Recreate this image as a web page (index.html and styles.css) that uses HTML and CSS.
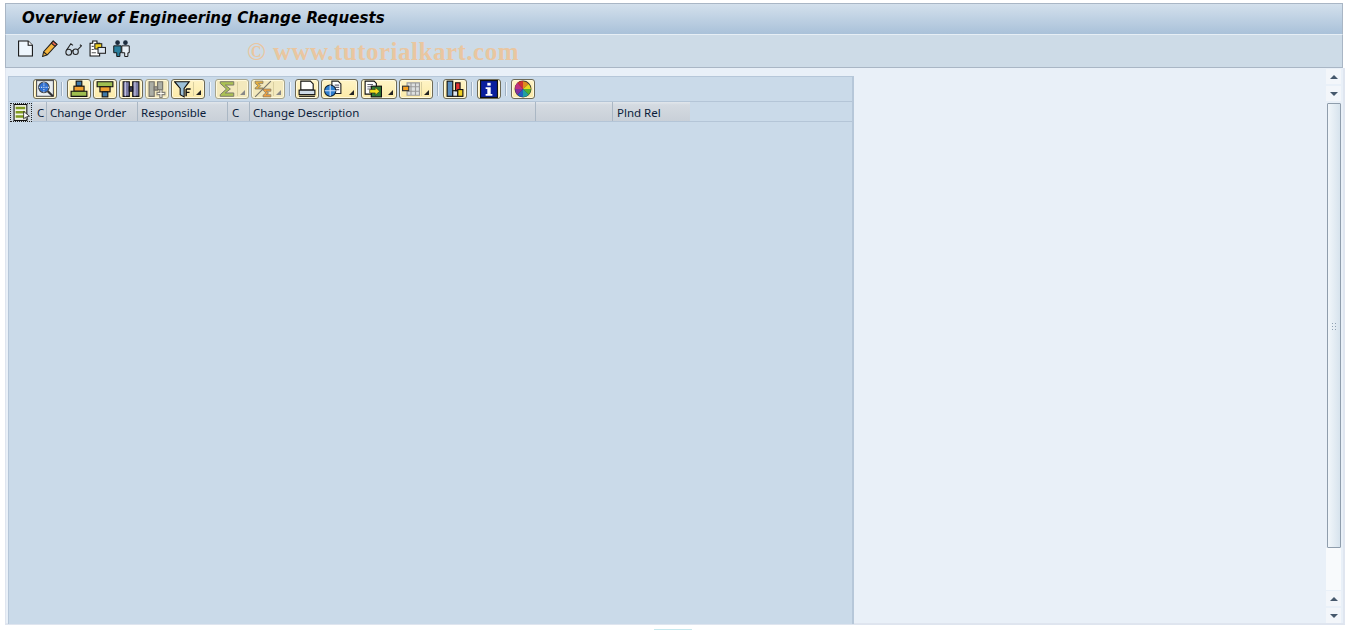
FILE: index.html
```html
<!DOCTYPE html>
<html lang="en">
<head>
<meta charset="utf-8">
<title>Overview of Engineering Change Requests</title>
<link rel="stylesheet" href="styles.css">
</head>
<body>
<div class="app">
  <header class="titlebar"><h1>Overview of Engineering Change Requests</h1></header>
  <nav class="apptools">
    <svg class="ti" viewBox="0 0 16 16"><path d="M1.500 1h9l4 4v10h-13z" fill="#eef6fd" stroke="#111"/><path d="M10.500 1v4h4" fill="#fff" stroke="#111"/></svg>
    <svg class="ti" viewBox="0 0 16 16"><path d="M11.500 1l3.500 3-9 10-4.500 1.500 1-4.500z" fill="#f5b53c" stroke="#222"/><path d="M11.500 1l3.500 3-1.800 2-3.500-3z" fill="#e7664d" stroke="#222"/><path d="M2.800 11.500l3 2.500" stroke="#222" fill="none"/></svg>
    <svg class="ti" viewBox="0 0 16 16"><g fill="none" stroke="#222"><ellipse cx="3.500" cy="11.500" rx="2.700" ry="2.800"/><ellipse cx="10" cy="11" rx="2.500" ry="2.600"/><path d="M6 10.500l1.700-.5M1.500 9.500l4-6 2 1.500M12 9l3.500-3.500-1.500-1"/></g></svg>
    <svg class="ti" viewBox="0 0 16 16"><path d="M1 3h2.500V1h4v2H10v12H1z" fill="#fff" stroke="#111"/><path d="M2.500 6h2M2.500 9h2M2.500 12h4" stroke="#555"/><rect x="5.500" y="3.500" width="6.500" height="5" fill="#f0d020" stroke="#222"/><rect x="8.500" y="7" width="7" height="5.500" fill="#dfe8f2" stroke="#222"/></svg>
    <svg class="ti" viewBox="0 0 16 16"><circle cx="4.300" cy="2.500" r="2.200" fill="#1c2b3c"/><circle cx="11.700" cy="2.500" r="2.200" fill="#1c2b3c"/><path d="M.7 5.500h7v6.500H6.500v3.500h-3V12H.7z" fill="#2a7f9e" stroke="#111" stroke-width=".9"/><path d="M8.300 5.500h7V12H14v3.500h-3V12H8.300z" fill="#e9f0f6" stroke="#111" stroke-width=".9"/></svg>
  </nav>
  <div class="watermark">© www.tutorialkart.com</div>
  <main class="workspace">
    <section class="grid-panel">
      <div class="grid-tools">
        <button class="btn"><svg viewBox="0 0 16 16"><rect x=".5" y=".5" width="15" height="14" fill="#e8eef2" stroke="#555"/><circle cx="7" cy="6.500" r="4.700" fill="#2f6fd0" stroke="#444"/><path d="M2.500 6.500h9M7 2v9" stroke="#d0e0f5" stroke-dasharray="1 1"/><path d="M10.500 10l4.500 4.500" stroke="#333" stroke-width="2"/></svg></button>
        <span class="sep"></span>
        <button class="btn"><svg viewBox="0 0 16 16"><rect x="5.500" y="1" width="5" height="4.500" fill="#3d78a8" stroke="#111"/><rect x="3.500" y="5.500" width="9" height="4.500" fill="#f0a030" stroke="#111"/><path d="M1 10h14v4.500H1z" fill="#9fbf50" stroke="#111"/></svg></button>
        <button class="btn"><svg viewBox="0 0 16 16"><path d="M1 1.500h14V6H1z" fill="#9fbf50" stroke="#111"/><rect x="3.500" y="6" width="9" height="4.500" fill="#f0a030" stroke="#111"/><rect x="5.500" y="10.500" width="5" height="4.500" fill="#3d78a8" stroke="#111"/></svg></button>
        <button class="btn"><svg viewBox="0 0 16 16"><path d="M1 1.500h5.500v13H1zM9.500 1.500H15v13H9.500z" fill="#7d7da8" stroke="#111"/><path d="M3 1.500v13M11.500 1.500v13" stroke="#c4c4dc"/><path d="M6.500 6h3v4h-3z" fill="#3a3a55" stroke="#111"/></svg></button>
        <button class="btn dim"><svg viewBox="0 0 16 16"><path d="M1 1.500h4.500v13H1zM8.500 1.500H13v7H8.500z" fill="#9aa0a0" stroke="#555"/><path d="M5.500 6h3v3h-3z" fill="#888" stroke="#555"/><path d="M10.500 8.500h2v2.500H15v2h-2.500v2.500h-2V13H8v-2h2.500z" fill="#fff" stroke="#666"/></svg></button>
        <button class="btn split"><svg viewBox="0 0 16 16"><path d="M.5 1.500h13L9 7.500V15l-3.500-2V7.500z" fill="#9cc0d8" stroke="#111"/><path d="M10.800 8h4M10.800 8v6.500M10.800 11h3" stroke="#111" stroke-width="1.300" fill="none"/></svg><i class="caret"></i></button>
        <span class="sep"></span>
        <button class="btn split dim"><svg viewBox="0 0 16 16"><path d="M14 4.500V1.500H2v1.500L7.500 8 2 13v1.500h12v-3H6.500L11 8 6.500 4.500z" fill="#9ab83a" stroke="#555" stroke-width=".8"/></svg><i class="caret"></i></button>
        <button class="btn split dim"><svg viewBox="0 0 16 16"><path d="M1 1h7v2H4l2 2-2 2h4v1H1V7l2.500-2L1 3z" fill="#e0a020" stroke="#555" stroke-width=".6"/><path d="M8 8h7v2h-4l2 1.500L11 13h4v2H8v-1.500l2.500-2L8 9z" fill="#f09020" stroke="#555" stroke-width=".6"/><path d="M1 15L15 1" stroke="#555"/></svg><i class="caret"></i></button>
        <span class="sep"></span>
        <button class="btn"><svg viewBox="0 0 16 16"><path d="M2.500 1H11l2.500 2.500V9h-11z" fill="#fff" stroke="#111"/><rect x="1" y="9" width="14" height="4" fill="#cfdbe6" stroke="#111"/><path d="M1 14.500h14" stroke="#111"/></svg></button>
        <button class="btn split wide"><svg viewBox="0 0 16 16"><path d="M7 1h5.500L15 3.500V12H7z" fill="#fff" stroke="#222"/><path d="M9.500 4.500h4M9.500 6.500h4M9.500 8.500h4" stroke="#667"/><circle cx="5.500" cy="9.500" r="5" fill="#2f7fd0" stroke="#123"/><path d="M5.500 4.500v10M.5 9.500h10" stroke="#cfe4fa"/></svg><i class="caret"></i></button>
        <button class="btn split wide2"><svg viewBox="0 0 16 16"><path d="M1 1h8l2 2v9.500H1z" fill="#fff" stroke="#111"/><path d="M3 4h5M3 6h5M3 8h3" stroke="#667"/><rect x="6.500" y="5.500" width="9" height="9.500" fill="#2e7d32" stroke="#111"/><path d="M5 8.500h5v-2l4 3.500-4 3.500v-2H5z" fill="#f5e020" stroke="#222" stroke-width=".5"/></svg><i class="caret"></i></button>
        <button class="btn split wide3"><svg viewBox="0 0 16 16"><path d="M4.500 2.500h11v11h-11zM4.500 6h11M4.500 10h11M8 2.500v11M12 2.500v11" fill="#dde0e0" stroke="#9a9a9a"/><rect x=".5" y="5.500" width="5.500" height="4" fill="#f5a020" stroke="#333"/></svg><i class="caret"></i></button>
        <span class="sep"></span>
        <button class="btn"><svg viewBox="0 0 16 16"><rect x="1" y="1" width="5" height="13.500" fill="#5b8fc0" stroke="#111"/><rect x="6" y="9.500" width="4.500" height="5" fill="#dfe6ee" stroke="#111"/><rect x="8.500" y="2.500" width="4" height="7" fill="#e03030" stroke="#111"/><rect x="10.500" y="8.500" width="4.500" height="6" fill="#f0d020" stroke="#111"/></svg></button>
        <span class="sep"></span>
        <button class="btn"><svg viewBox="0 0 16 16"><rect x=".5" y=".5" width="15" height="15" fill="#0a1f9e" stroke="#111"/><rect x="6.500" y="2.500" width="3" height="2.500" fill="#fff"/><path d="M5 6.500h4.500v6H11V14H5v-1.500h1.500v-4.500H5z" fill="#fff"/></svg></button>
        <span class="sep"></span>
        <button class="btn"><svg viewBox="0 0 16 16"><circle cx="8" cy="8" r="7.500" fill="#333"/><path d="M8 8L3 2.500A7 7 0 0 1 8 1z" fill="#d03030"/><path d="M8 8V1a7 7 0 0 1 5 2.500z" fill="#e08a20"/><path d="M8 8l5-4.500A7 7 0 0 1 15 8z" fill="#e8d820"/><path d="M8 8h7a7 7 0 0 1-2 5z" fill="#50b030"/><path d="M8 8l5 5a7 7 0 0 1-5 2z" fill="#20a0a0"/><path d="M8 8v7a7 7 0 0 1-5-2z" fill="#2060c0"/><path d="M8 8l-5 5a7 7 0 0 1-2-5z" fill="#8030a0"/><path d="M8 8H1a7 7 0 0 1 2-5.500z" fill="#c03080"/></svg></button>
      </div>
      <div class="grid-head">
        <button class="marker"><svg viewBox="0 0 16 16"><rect x="1" y=".5" width="12" height="15" fill="#f4f6e8" stroke="#111"/><path d="M2.500 2.500h9v2.500h-9zM2.500 6.500h9V9h-9zM2.500 10.500h9V13h-9z" fill="#7f9a20"/><path d="M10 7l5.500 4.500-2.700.5 1 2.500-1 .4-1-2.500L10 14z" fill="#fff" stroke="#111" stroke-width=".7"/></svg></button>
        <div class="cols">
          <span class="col c1">C</span>
          <span class="col c2">Change Order</span>
          <span class="col c3">Responsible</span>
          <span class="col c4">C</span>
          <span class="col c5">Change Description</span>
          <span class="col c6"></span>
          <span class="col c7">Plnd Rel</span>
        </div>
      </div>
    </section>
    <aside class="scroller">
      <span class="sb-btn"><i class="up"></i></span>
      <span class="sb-btn"><i class="down"></i></span>
      <span class="thumb"><span class="grip"></span></span>
      <span class="track"></span>
      <span class="sb-btn"><i class="up"></i></span>
      <span class="sb-btn"><i class="down"></i></span>
    </aside>
  </main>
  <span class="stub"></span>
</div>
</body>
</html>
```
FILE: styles.css
```css
* { box-sizing: border-box; }
html, body { margin: 0; height: 100%; background: #fff; overflow: hidden; }
body { font-family: "Noto Sans", sans-serif; color: #0a1a33; }
.app { position: relative; width: 1355px; height: 630px; padding: 3px 12px 0 5px; }
.titlebar { height: 32px; background: linear-gradient(#d3e0ec, #a9c1d9); border: 1px solid #a9b6c5; border-bottom: 1px solid #e6eef5; padding: 0 0 0 16px; display: flex; align-items: center; }
.titlebar h1 { margin: 0; font: italic bold 15px "DejaVu Sans", sans-serif; letter-spacing: .08px; color: #000; white-space: nowrap; transform: translateY(-1px); }
.apptools { height: 33px; background: #cddbe7; border: 1px solid #a9b6c5; border-top: 0; display: flex; align-items: flex-start; gap: 7px; padding: 5px 0 0 11px; }
.ti { width: 17px; height: 17px; display: block; }
.watermark { position: absolute; left: 247px; top: 38px; font: bold 25px "Liberation Serif", serif; letter-spacing: .5px; color: #e9c6a0; white-space: nowrap; }
.workspace { height: 557px; background: #e9f0f8; border-bottom: 2px solid #dfe5ef; border-left: 1px solid #dfe5ef; border-right: 2px solid #e0e6f0; margin-right: -2px; display: flex; padding: 1px 0 0 2px; }
.grid-panel { width: 846px; height: 548px; margin-top: 7px; background: #cadae9; border: 1px solid #b6c7d9; border-bottom: 0; border-right-width: 2px; }
.grid-tools { height: 25px; border-bottom: 1px solid #b4c5d7; display: flex; align-items: flex-start; gap: 2px; padding: 2px 0 0 24px; }
.btn { width: 24px; height: 20px; position: relative; background: linear-gradient(#fff4c6, #fbeaa8); border: 1px solid #6e6a55; border-radius: 3px; display: flex; align-items: center; justify-content: flex-start; padding: 0 0 0 2px; box-shadow: inset 0 0 0 1px #fff9dc; }
.btn svg { width: 18px; height: 18px; display: block; flex: none; }
.btn.split { width: 34px; }
.btn.split::before { content: ""; position: absolute; left: 21px; top: 2px; bottom: 2px; width: 1px; background: #d9cfa0; }
.btn.wide { width: 37px; }
.btn.wide2 { width: 36px; margin-left: 1px; }
.btn.wide::before, .btn.wide2::before { display: none; }
.btn.dim { background: #f3e9bd; border-color: #a6a48e; }
.btn.dim svg { opacity: .8; }
.caret { position: absolute; right: 3px; bottom: 3px; width: 0; height: 0; border-left: 5px solid transparent; border-bottom: 5px solid #222; }
.dim .caret { border-bottom-color: #888; }
.sep { width: 2px; height: 14px; margin: 3px 2px 0; background: #eef3f8; border-left: 1px solid #9fb0c2; flex: none; }
.grid-head { height: 20px; border-bottom: 1px solid #b4c5d7; display: flex; padding-left: 1px; }
.marker { width: 22px; height: 19px; margin-top: 1px; padding: 0 0 0 2px; background: #cdd7e0; border: 1px dotted #222; display: flex; align-items: center; }
.marker svg { width: 17px; height: 17px; flex: none; }
.cols { display: flex; margin-left: 1px; height: 19px; }
.col { font-size: 11.5px; line-height: 21px; overflow: hidden; white-space: nowrap; background: linear-gradient(#e2e7ec 0, #d4dae1 15%, #c9d0d8 100%); border-right: 1px solid #aab7c4; color: #0b1c3a; }
.c1 { width: 14px; padding-left: 4px; }
.c2 { width: 91px; padding-left: 3px; }
.c3 { width: 90px; padding-left: 3px; }
.c4 { width: 22px; padding-left: 4px; }
.c5 { width: 286px; padding-left: 3px; }
.c6 { width: 77px; }
.c7 { width: 77px; padding-left: 4px; border-right: 0; }
.scroller { width: 15px; margin-left: 472px; height: 555px; display: flex; flex-direction: column; gap: 2px; }
.sb-btn { height: 15px; background: #f3f6fa; display: flex; align-items: center; justify-content: center; flex: none; }
.up { border-left: 4px solid transparent; border-right: 4px solid transparent; border-bottom: 4px solid #46586c; }
.down { border-left: 4px solid transparent; border-right: 4px solid transparent; border-top: 4px solid #46586c; }
.thumb { height: 445px; margin-left: 1px; flex: none; background: linear-gradient(90deg, #f1f6fa, #d7e3ed); border: 1px solid #8f9dac; border-radius: 1px; display: flex; align-items: center; justify-content: center; margin-bottom: -2px; }
.grip { width: 7px; height: 8px; background: radial-gradient(circle, #8fa0b2 0 .8px, transparent 1px) 0 0 / 3px 3px; }
.track { height: 42px; background: #f8fafc; flex: none; margin-bottom: -1px; }
.stub { position: absolute; left: 654px; top: 629px; width: 38px; height: 1px; background: #c5e8ee; }
```
